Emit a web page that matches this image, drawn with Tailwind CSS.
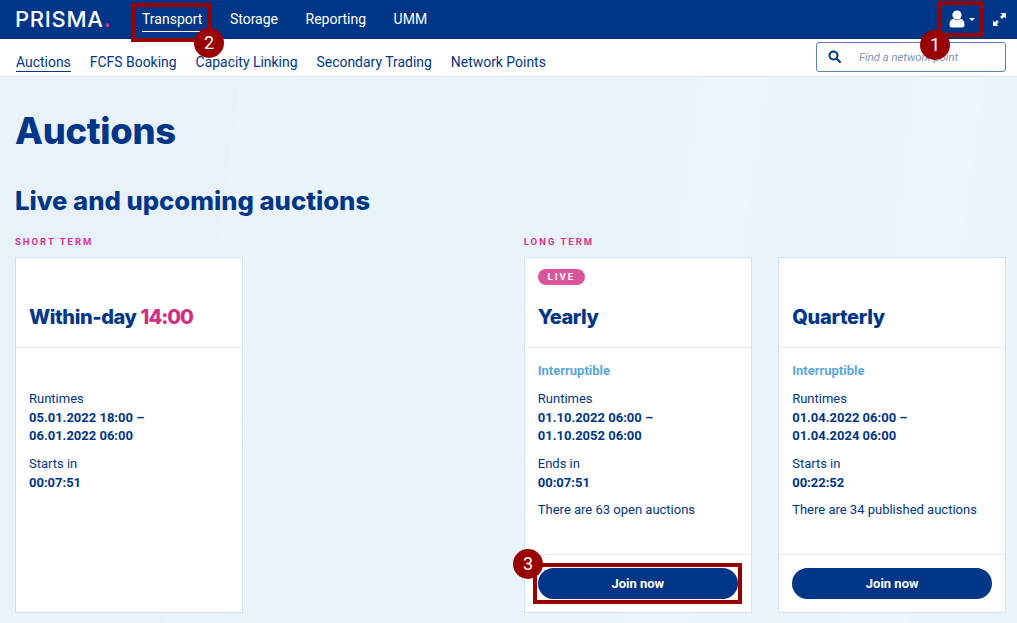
<!DOCTYPE html>
<html lang="en">
<head>
  <meta charset="UTF-8">
  <title>PRISMA Auctions</title>
  <script src="https://cdn.jsdelivr.net/npm/@tailwindcss/browser@4"></script>
</head>
<body class="relative w-[1017px] h-[623px] overflow-hidden bg-[#e9f2fa] font-['Roboto',sans-serif] text-[#003687]">
  <!-- Top bar -->
  <header class="h-[39px] bg-[#003687] border-b border-[#002c6e] flex items-center text-white">
    <div class="ml-[15px] w-[127px] font-['Inter',sans-serif] text-[22px] leading-none tracking-[0.700px] font-medium">PRISMA<span class="text-[#d6338a] font-bold">.</span></div>
    <nav class="flex gap-[27.500px] text-[14px] mt-[2px]">
      <a class="border-b border-white pb-[1px]">Transport</a>
      <a>Storage</a>
      <a>Reporting</a>
      <a>UMM</a>
    </nav>
    <div class="ml-auto flex items-center mr-[11px] gap-[18px]">
      <div class="flex items-center gap-[4px]">
        <svg width="16" height="18" viewBox="0 0 16 18" fill="white"><circle cx="8" cy="5" r="4.6"/><path d="M0.5 15c0-4 1.8-6 4-6.2 1 .8 2.1 1.2 3.5 1.2s2.500-.4 3.500-1.200c2.200.2 4 2.200 4 6.200 0 1.800-1.200 2.500-2.500 2.500H3c-1.300 0-2.500-.7-2.500-2.500z"/></svg>
        <span class="w-0 h-0 border-x-[3px] border-x-transparent border-t-[3px] border-t-white"></span>
      </div>
      <svg width="13" height="13" viewBox="0 0 13 13" fill="white"><path d="M7.500 0H13v5.500l-1.800-1.800-2.200 2.200-1.900-1.900 2.200-2.200zM5.500 13H0V7.500l1.800 1.800 2.200-2.200 1.900 1.900-2.200 2.200z"/></svg>
    </div>
  </header>

  <!-- Sub navigation -->
  <div class="h-[38px] bg-white border-b border-[#dfe9f2] flex items-center pl-[16px] pr-[11px]">
    <nav class="flex gap-[19px] text-[13.950px] mt-[11px]">
      <a class="border-b border-[#003687] leading-[17px]">Auctions</a>
      <a class="leading-[17px]">FCFS Booking</a>
      <a class="leading-[17px]">Capacity Linking</a>
      <a class="leading-[17px]">Secondary Trading</a>
      <a class="leading-[17px]">Network Points</a>
    </nav>
    <div class="ml-auto w-[190px] h-[30px] border border-[#5b7fb5] rounded-[3px] flex items-center pl-[11px] mb-[2px]">
      <svg width="13" height="13" viewBox="0 0 13 13" fill="none" stroke="#003687" stroke-width="2"><circle cx="5.500" cy="5.500" r="4"/><path d="M8.500 8.500l3.500 3.500" stroke-linecap="round"/></svg>
      <span class="ml-[18px] text-[11.300px] leading-[14px] italic text-[#7d93b8] mt-[2px]">Find a network point</span>
    </div>
  </div>

  <!-- Page content -->
  <main class="relative h-[546px] px-[15px] overflow-hidden bg-[linear-gradient(98deg,#e9f2fa_0%,#e9f2fa_22%,#ebf4fb_22%,#ebf4fb_27%,#e9f3fa_27%,#e9f3fa_40%,#ecf4fb_40%,#ecf4fb_46%,#eaf3fb_46%,#eaf3fb_64%,#edf5fc_64%,#edf5fc_70%,#ebf4fb_70%,#ebf4fb_84%,#edf5fc_84%,#edf5fc_90%,#ebf4fb_90%)]">
    <h1 class="mt-[33px] font-['Inter',sans-serif] font-extrabold text-[36.300px] leading-[42px] tracking-[-0.300px]">Auctions</h1>
    <h2 class="mt-[33px] font-['Inter',sans-serif] font-extrabold text-[25.650px] leading-[32px]">Live and upcoming auctions</h2>

    <div class="mt-[19px] grid grid-cols-[228px_228px_228px_228px] gap-x-[26.400px]">
      <div class="col-span-2 text-[9.500px] leading-[12px] font-bold tracking-[2px] text-[#d6338a]">SHORT TERM</div>
      <div class="col-span-2 text-[9.500px] leading-[12px] font-bold tracking-[2px] text-[#d6338a]">LONG TERM</div>
    </div>

    <div class="mt-[9px] grid grid-cols-[228px_228px_228px_228px] gap-x-[26.400px] h-[356px] text-[13px] leading-[18px]">
      <!-- Within-day -->
      <section class="bg-white border border-[#cfe2f1] flex flex-col">
        <div class="h-[90px] border-b border-[#e3ebf3] px-[13px] pt-[45px]">
          <h3 class="font-['Inter',sans-serif] font-extrabold text-[20px] leading-[28px] tracking-[-0.400px]">Within-day <span class="text-[#cf2f84] tracking-[-1px]">14:00</span></h3>
        </div>
        <div class="px-[13px] pt-[42px]">
          <p class="mb-[1px]">Runtimes</p>
          <p class="font-bold">05.01.2022 18:00 –<br>06.01.2022 06:00</p>
          <p class="mt-[10px]">Starts in</p>
          <p class="font-bold mt-[1px]">00:07:51</p>
        </div>
      </section>

      <div></div>

      <!-- Yearly -->
      <section class="bg-white border border-[#cfe2f1] flex flex-col">
        <div class="h-[90px] border-b border-[#e3ebf3] px-[13px] pt-[11px]">
          <span class="block w-[47px] h-[16px] rounded-full bg-[#d9559b] text-white text-[9.500px] leading-[16px] font-bold tracking-[2px] text-center">LIVE</span>
          <h3 class="mt-[18px] font-['Inter',sans-serif] font-extrabold text-[20px] leading-[28px] tracking-[-0.500px]">Yearly</h3>
        </div>
        <div class="px-[13px] pt-[14px] flex-1">
          <p class="font-bold text-[#5aa7dd] mb-[10px]">Interruptible</p>
          <p class="mb-[1px]">Runtimes</p>
          <p class="font-bold">01.10.2022 06:00 –<br>01.10.2052 06:00</p>
          <p class="mt-[10px]">Ends in</p>
          <p class="font-bold mt-[1px]">00:07:51</p>
          <p class="mt-[9px]">There are 63 open auctions</p>
        </div>
        <div class="h-[58px] border-t border-[#e3ebf3] px-[13px] pt-[13px]">
          <button class="w-full h-[31px] rounded-full bg-[#003687] text-white font-bold text-[13px]">Join now</button>
        </div>
      </section>

      <!-- Quarterly -->
      <section class="bg-white border border-[#cfe2f1] flex flex-col">
        <div class="h-[90px] border-b border-[#e3ebf3] px-[13px] pt-[45px]">
          <h3 class="font-['Inter',sans-serif] font-extrabold text-[20px] leading-[28px] tracking-[-0.300px]">Quarterly</h3>
        </div>
        <div class="px-[13px] pt-[14px] flex-1">
          <p class="font-bold text-[#5aa7dd] mb-[10px]">Interruptible</p>
          <p class="mb-[1px]">Runtimes</p>
          <p class="font-bold">01.04.2022 06:00 –<br>01.04.2024 06:00</p>
          <p class="mt-[10px]">Starts in</p>
          <p class="font-bold mt-[1px]">00:22:52</p>
          <p class="mt-[9px]">There are 34 published auctions</p>
        </div>
        <div class="h-[58px] border-t border-[#e3ebf3] px-[13px] pt-[13px]">
          <button class="w-full h-[31px] rounded-full bg-[#003687] text-white font-bold text-[13px]">Join now</button>
        </div>
      </section>
    </div>
  </main>

  <!-- Tutorial highlights over the page -->
  <div class="absolute left-[131px] top-[3px] w-[81px] h-[39px] border-[4px] border-[#990000]"></div>
  <div class="absolute left-[937px] top-[1px] w-[47px] h-[36px] border-[4px] border-[#990000]"></div>
  <div class="absolute left-[533px] top-[563px] w-[209px] h-[41px] border-[4px] border-[#990000]"></div>
  <div class="absolute left-[194px] top-[28px] w-[30px] h-[30px] rounded-full bg-[#990000] text-white text-[18px] leading-[30px] text-center">2</div>
  <div class="absolute left-[920px] top-[30px] w-[30px] h-[30px] rounded-full bg-[#990000] text-white text-[18px] leading-[30px] text-center">1</div>
  <div class="absolute left-[513px] top-[549px] w-[30px] h-[30px] rounded-full bg-[#990000] text-white text-[18px] leading-[30px] text-center">3</div>
</body>
</html>
